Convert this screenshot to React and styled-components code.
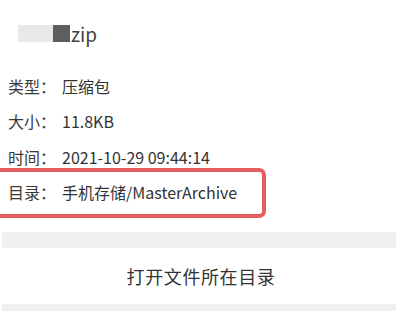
import React from 'react';
import styled, { createGlobalStyle } from 'styled-components';

const GlobalStyle = createGlobalStyle`
    html, body {
        margin: 0;
        padding: 0;
        background: #fff;
    }
    body {
        font-family: "Noto Sans CJK SC", "Noto Sans", sans-serif;
        color: #333;
    }
`;

const rows = [
    { label: '类型：', value: '压缩包' },
    { label: '大小：', value: '11.8KB' },
    { label: '时间：', value: '2021-10-29 09:44:14' },
    { label: '目录：', value: '手机存储/MasterArchive', marked: true },
];

function App () {
    return (
        <Page>
            <GlobalStyle />
            <Header>
                <Mosaic>
                    <Cell tone="#e9e9e9" w={35} />
                    <Cell tone="#5e5e5e" w={17} />
                </Mosaic>
                <FileName>zip</FileName>
            </Header>
            <InfoList>
                {rows.map(row => (
                    <Row key={row.label} marked={row.marked}>
                        <Label>{row.label}</Label>
                        <Value>{row.value}</Value>
                    </Row>
                ))}
            </InfoList>
            <Band />
            <ActionButton>打开文件所在目录</ActionButton>
            <Band small />
        </Page>
    )
}

const Page = styled.div`
    width: 396px;
    height: 311px;
    overflow: hidden;
    background: #fff;
    display: flex;
    flex-direction: column;
`;
const Header = styled.div`
    height: 56px;
    padding: 15px 0 0 18px;
    box-sizing: border-box;
    display: flex;
    align-items: flex-start;
`;
const Mosaic = styled.div`
    display: flex;
    height: 17px;
    margin-top: 10px;
    filter: blur(0.6px);
`;
const Cell = styled.span`
    display: block;
    width: ${p => p.w}px;
    height: 100%;
    background: ${p => p.tone};
`;
const FileName = styled.span`
    font-size: 19px;
    line-height: 38px;
    margin-left: 1px;
    color: #444;
`;
const InfoList = styled.div`
    display: flex;
    flex-direction: column;
    padding-top: 12px;
`;
const Row = styled.div`
    position: relative;
    height: 35.5px;
    display: flex;
    align-items: center;
    padding-left: 8px;
    font-size: 16px;

    &::after {
        content: '';
        display: ${p => (p.marked ? 'block' : 'none')};
        position: absolute;
        left: -10px;
        top: -7px;
        width: 276px;
        height: 50px;
        box-sizing: border-box;
        border: 4px solid #e35d5f;
        border-radius: 7px;
    }
`;
const Label = styled.span`
    width: 54px;
    flex-shrink: 0;
    color: #3a3a3a;
`;
const Value = styled.span`
    color: #333;
`;
const Band = styled.div`
    margin-top: ${p => (p.small ? '0' : '22px')};
    margin-left: 2px;
    height: ${p => (p.small ? '7px' : '16px')};
    background: #efefef;
    flex-shrink: 0;
`;
const ActionButton = styled.div`
    height: 56px;
    display: flex;
    align-items: center;
    justify-content: center;
    font-size: 18px;
    letter-spacing: 0.6px;
    color: #333;
    padding-left: 6px;
`;

export default App;
